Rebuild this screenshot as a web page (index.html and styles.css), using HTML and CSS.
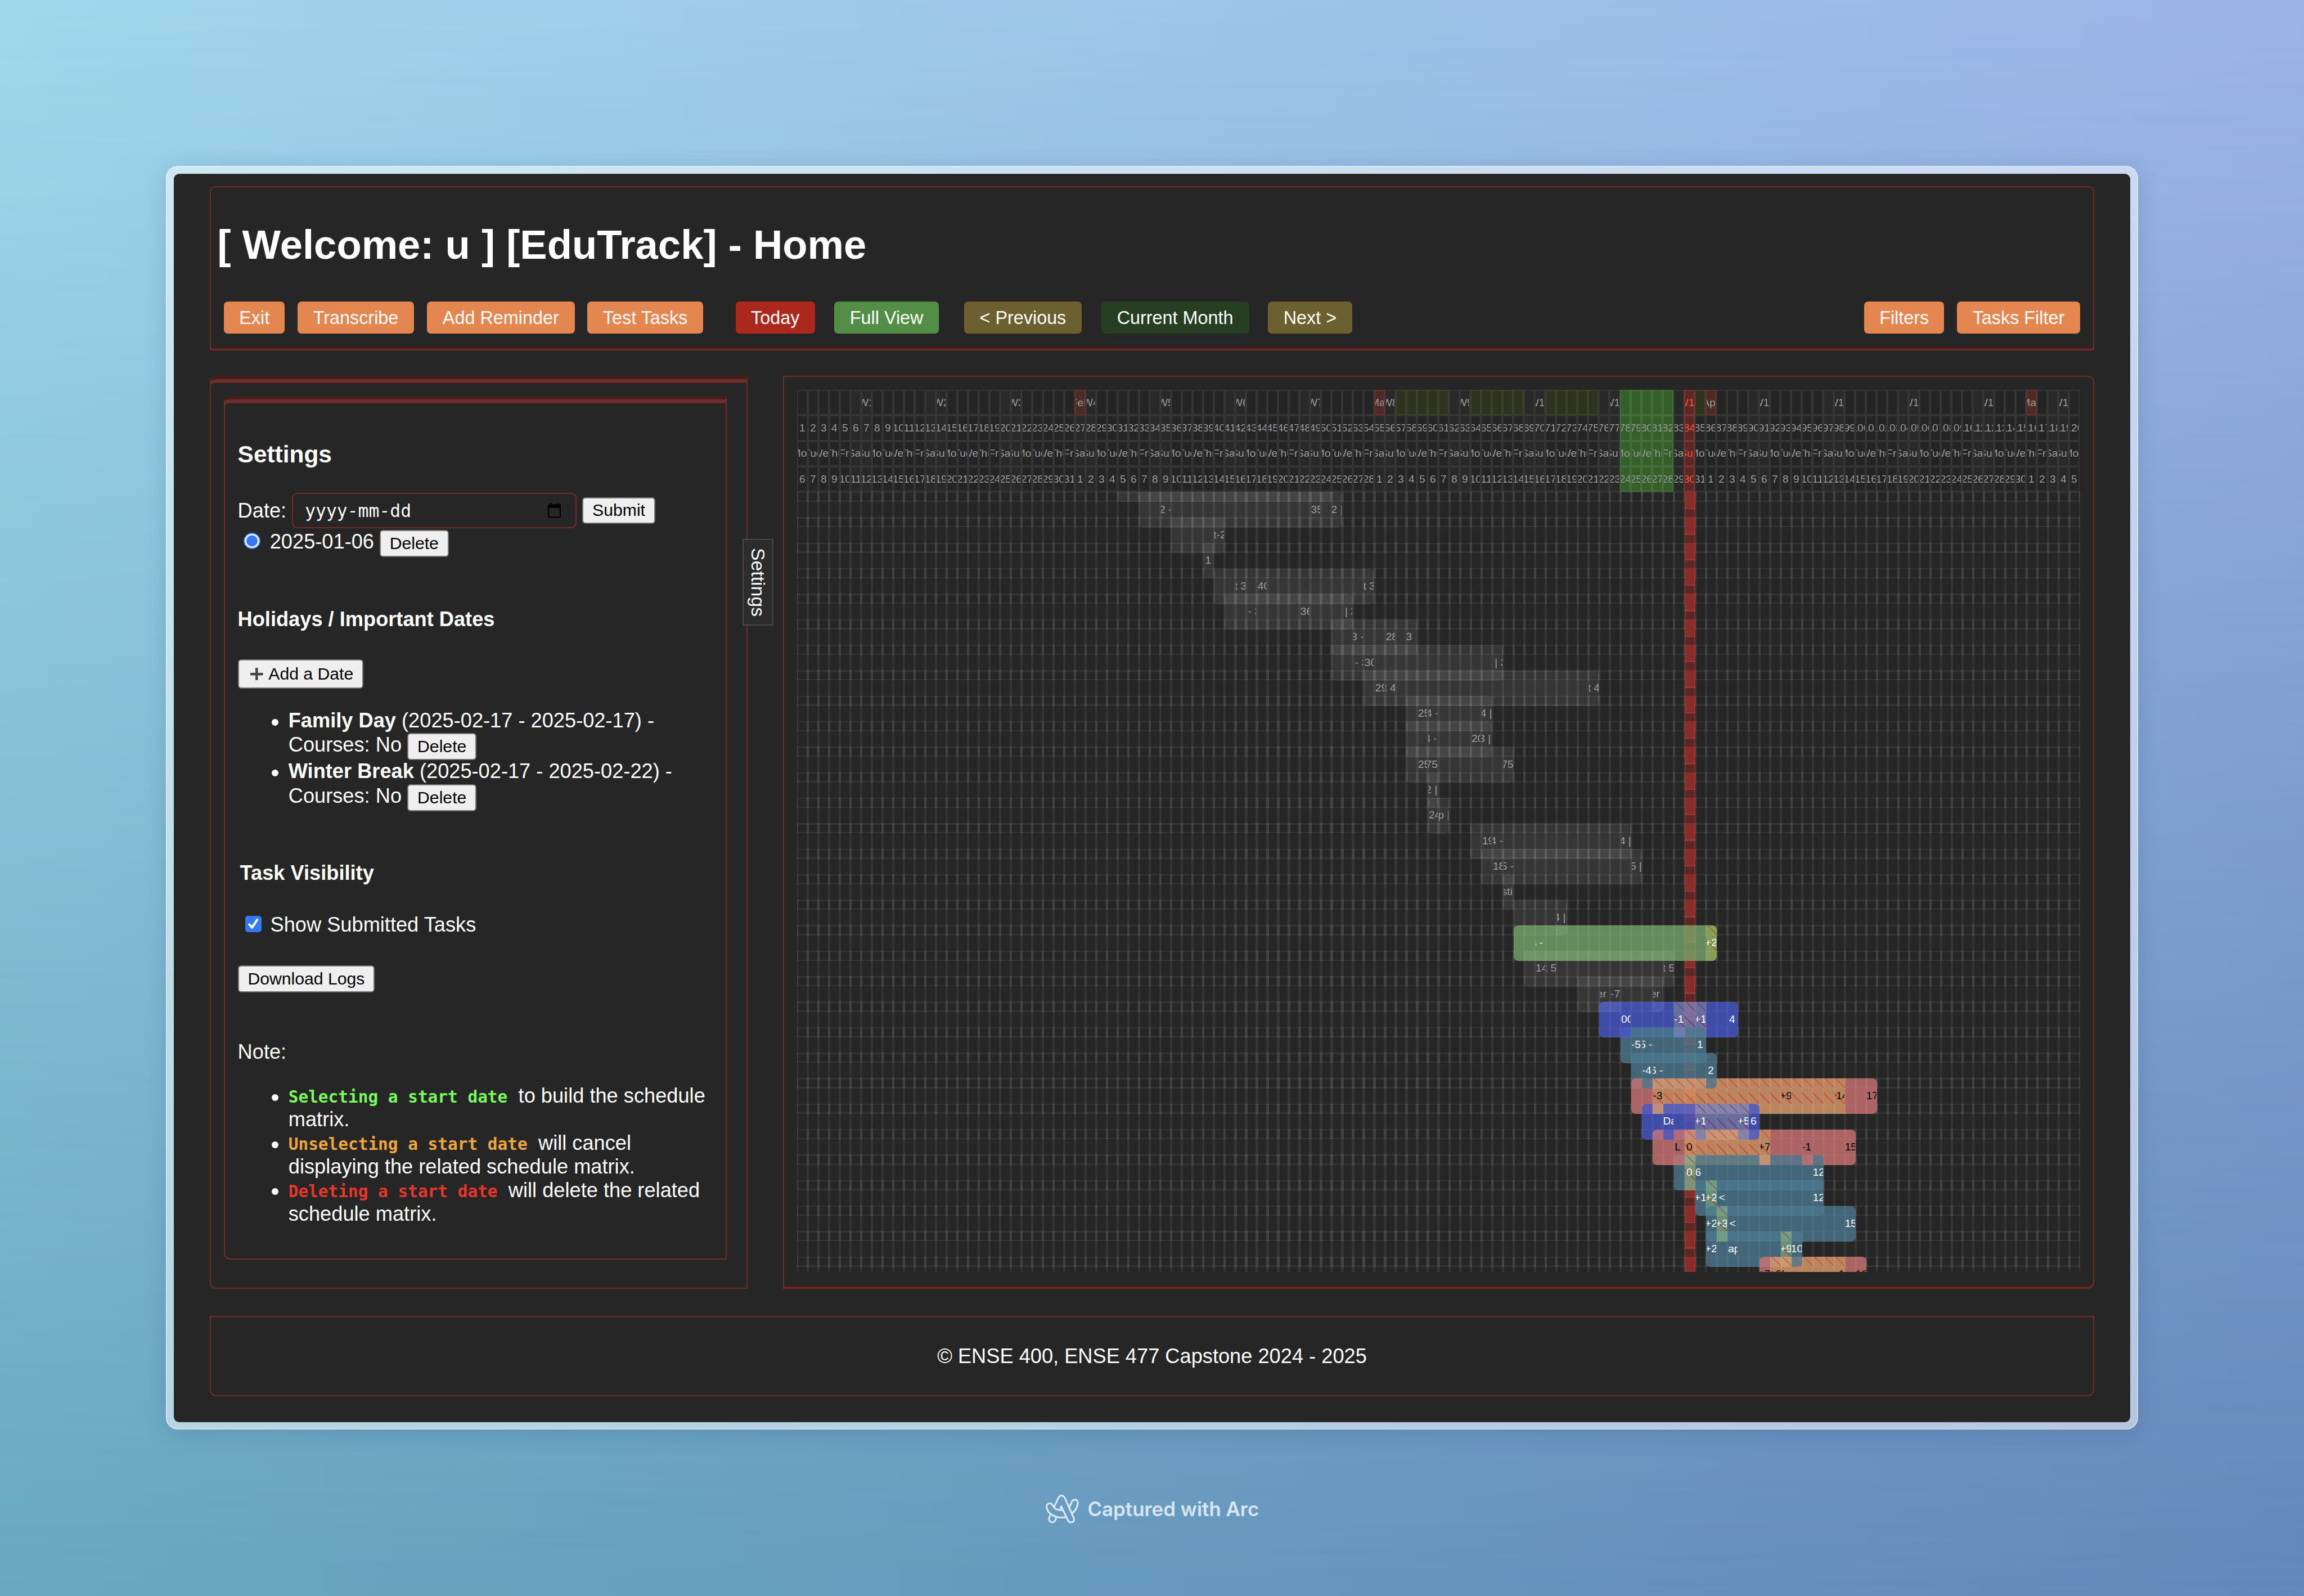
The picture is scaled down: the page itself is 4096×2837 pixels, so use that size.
FILE: index.html
```html
<!DOCTYPE html>
<html lang="en">
<head>
<meta charset="utf-8">
<title>[EduTrack] - Home</title>
<link rel="stylesheet" href="styles.css">
</head>
<body>
<div class="backdrop"></div>
<div class="stage">
  <div class="frame">
    <div class="window">
      <header class="top">
        <h1>[ Welcome: u ] [EduTrack] - Home</h1>
        <nav class="bar">
          <button class="btn w-exit">Exit</button>
          <button class="btn w-trans">Transcribe</button>
          <button class="btn w-add">Add Reminder</button>
          <button class="btn w-test">Test Tasks</button>
          <button class="btn today w-today">Today</button>
          <button class="btn full w-full">Full View</button>
          <button class="btn step w-prev">&lt; Previous</button>
          <button class="btn month w-month">Current Month</button>
          <button class="btn step w-next">Next &gt;</button>
          <span class="spacer"></span>
          <button class="btn w-filters">Filters</button>
          <button class="btn w-tasks">Tasks Filter</button>
        </nav>
      </header>

      <main class="columns">
        <aside class="side">
          <div class="settings">
            <h3>Settings</h3>
            <div class="date-row">
              <span>Date:</span>
              <div class="date-input"><span>yyyy-mm-dd</span>
                <svg class="cal" viewBox="0 0 29 33"><path fill="#000" fill-rule="evenodd" d="M4 3V0h4v3h13V0h4v3h1q3 0 3 3v24q0 3-3 3H3q-3 0-3-3V6q0-3 3-3zM3 11v19h23V11z"/></svg>
              </div>
              <button class="plain w-submit">Submit</button>
            </div>
            <div class="radio-row">
              <i class="radio"></i><span>2025-01-06</span><button class="plain w-delete">Delete</button>
            </div>
            <h4 class="holidays">Holidays / Important Dates</h4>
            <button class="plain add-date"><svg class="plus" viewBox="0 0 28 28"><path d="M14 0v28M0 14h28" stroke="#444" stroke-width="5.5"/></svg>Add a Date</button>
            <ul class="dates">
              <li><div><b>Family Day</b> (2025-02-17 - 2025-02-17) -</div><div class="second"><span>Courses: No</span><button class="plain w-delete">Delete</button></div></li>
              <li><div><b>Winter Break</b> (2025-02-17 - 2025-02-22) -</div><div class="second"><span>Courses: No</span><button class="plain w-delete">Delete</button></div></li>
            </ul>
            <h4 class="visibility">Task Visibility</h4>
            <div class="check-row"><svg class="check" viewBox="0 0 36 36"><rect width="36" height="36" rx="6" fill="#3577f5"/><path d="M9 19l6 7L26.500 8.500" fill="none" stroke="#fff" stroke-width="5" stroke-linecap="round" stroke-linejoin="round"/></svg><span>Show Submitted Tasks</span></div>
            <button class="plain logs">Download Logs</button>
            <p class="note">Note:</p>
            <ul class="notes">
              <li><code class="c-green">Selecting a start date</code> to build the schedule<br>matrix.</li>
              <li><code class="c-amber">Unselecting a start date</code> will cancel<br>displaying the related schedule matrix.</li>
              <li><code class="c-red">Deleting a start date</code> will delete the related<br>schedule matrix.</li>
            </ul>
          </div>
          <div class="tab">Settings</div>
        </aside>

        <section class="chart">
          <div class="head" id="head"></div>
          <div class="body" id="body"><div class="now"></div></div>
        </section>
      </main>

      <footer class="foot">© ENSE 400, ENSE 477 Capstone 2024 - 2025</footer>
    </div>
  </div>
  <div class="credit">
    <svg viewBox="80 90 224 190" fill="none" stroke="#d6e7f2" stroke-width="11.500" stroke-linejoin="round" stroke-linecap="round">
      <path d="M141 168L167 112Q187 85 207 112L267 246C276 275 240 282 229 262L196 192L186 168L176 191"/>
      <path d="M90 176C86 148 118 142 129 162C138 184 162 196 190 194M90 176C96 215 140 243 190 242Q205 242 217 238"/>
      <path d="M115 222L106 246C100 276 138 282 147 258L154 241"/>
      <path d="M238 175L252 144C258 120 293 120 293 146C292 172 276 200 254 215"/>
    </svg>
    <span>Captured with Arc</span>
  </div>
</div>
<script src="chart.js"></script>
</body>
</html>
```
FILE: styles.css
```css
html { font-size: 80.503px; }
* { box-sizing: border-box; }
body {
  margin: 0;
  width: 4096px;
  height: 2837px;
  overflow: hidden;
  position: relative;
  font-family: "Liberation Sans", Arial, sans-serif;
  font-size: .45rem;
  line-height: .52rem;
  color: #fff;
  background: linear-gradient(to right, #68a9c0, #6488ba);
}
.backdrop {
  position: absolute;
  inset: 0;
  background: linear-gradient(to right, #a0d7eb, #9bb4e6);
  mask-image: linear-gradient(to bottom, #000, transparent);
}
.stage {
  position: relative;
  height: 100%;
  display: flex;
  flex-direction: column;
  align-items: center;
  padding-top: 3.67rem;
}
.frame {
  width: 43.54rem;
  height: 27.9rem;
  padding: .17rem;
  border-radius: .26rem;
  background: rgba(255, 255, 255, .5);
  box-shadow: inset 0 0 0 .02rem rgba(255, 255, 255, .45), 0 .1rem .5rem rgba(30, 60, 110, .18);
}
.window {
  height: 100%;
  border-radius: .12rem;
  background: #262626;
  padding: .27rem .79rem 0;
}
.top {
  height: 3.63rem;
  border: .025rem solid #702d29;
  border-bottom: .04rem solid #702d29;
  box-shadow: inset 0 -.04rem #451e1b;
  border-radius: .12rem .12rem 0 0;
  padding: 0 .29rem 0 .13rem;
}
h1 {
  margin: .76rem 0 0 .015rem;
  font-size: .9rem;
  line-height: 1.02rem;
  white-space: nowrap;
}
.bar { display: flex; margin: .745rem 0 0 .16rem; }
.btn {
  font: .402rem/.7rem "Liberation Sans", Arial, sans-serif;
  height: .712rem;
  border: 0;
  border-radius: .09rem;
  padding: 0;
  background: #e38650;
  color: #fff;
  white-space: nowrap;
}
.today { background: #ad281c; }
.full { background: #528e45; }
.step { background: #6c6031; }
.month { background: #263f22; }
.spacer { flex: 1; }
.w-exit { width: 1.345rem; margin-right: .28rem; }
.w-trans { width: 2.575rem; margin-right: .285rem; }
.w-add { width: 3.26rem; margin-right: .28rem; }
.w-test { width: 2.56rem; margin-right: .715rem; }
.w-today { width: 1.755rem; margin-right: .425rem; }
.w-full { width: 2.31rem; margin-right: .555rem; }
.w-prev { width: 2.6rem; margin-right: .43rem; }
.w-month { width: 3.265rem; margin-right: .42rem; }
.w-next { width: 1.855rem; }
.w-filters { width: 1.77rem; margin-right: .28rem; }
.w-tasks { width: 2.72rem; }

.columns { display: flex; justify-content: space-between; margin-top: .56rem; height: 20.16rem; }
.side {
  position: relative;
  width: 11.88rem;
  border: .025rem solid #702d29;
  border-top: .08rem solid #451e1b;
  box-shadow: inset 0 .08rem #702d29;
  border-radius: .14rem 0 0 .14rem;
  padding: .37rem .44rem .62rem .29rem;
}
.settings {
  height: 100%;
  border: .025rem solid #702d29;
  border-top: .08rem solid #451e1b;
  box-shadow: inset 0 .08rem #702d29;
  border-radius: .14rem 0 0 .14rem;
  padding: .08rem 0 0 .28rem;
  white-space: nowrap;
}
h3 { margin: .835rem 0 0; font-size: .527rem; line-height: .6rem; }
h4 { margin: 0; font-size: .45rem; line-height: .52rem; }
.date-row { display: flex; align-items: center; gap: .125rem; height: .78rem; margin-top: .55rem; }
.date-input {
  display: flex;
  align-items: center;
  justify-content: space-between;
  width: 6.285rem;
  height: .78rem;
  border: .025rem solid #702d29;
  border-radius: .12rem;
  padding: 0 .32rem 0 .26rem;
  font: .39rem "DejaVu Sans Mono", monospace;
}
.cal { width: .29rem; height: .33rem; }
.plain {
  font: .375rem/.5rem "Liberation Sans", Arial, sans-serif;
  height: .595rem;
  padding: 0;
  border: .027rem solid #767676;
  border-radius: .07rem;
  background: #efefef;
  color: #000;
  white-space: nowrap;
}
.w-submit { width: 1.61rem; }
.w-delete { width: 1.53rem; }
.radio-row { display: flex; align-items: center; height: .66rem; }
.radio {
  width: .365rem;
  height: .365rem;
  margin: -.1rem .21rem 0 .135rem;
  border-radius: 50%;
  border: .03rem solid #3577f5;
  background: radial-gradient(circle, #3577f5 0 52%, #fff 58%);
}
.radio-row span { margin: -.06rem .12rem 0 0; }
.radio-row .plain { margin-top: .02rem; }
.holidays { margin-top: 1.09rem; }
.add-date {
  display: flex;
  align-items: center;
  width: 2.77rem;
  height: .65rem;
  margin-top: .625rem;
  padding-left: .255rem;
}
.plus { width: .28rem; height: .28rem; margin-right: .12rem; }
ul { margin: 0; padding: 0; list-style: none; }
li { position: relative; padding-left: 1.12rem; }
li::before {
  content: "";
  position: absolute;
  left: .75rem;
  top: .22rem;
  width: .15rem;
  height: .15rem;
  border-radius: 50%;
  background: #fff;
}
.dates { margin-top: .443rem; }
.second { display: flex; align-items: center; gap: .125rem; height: .605rem; }
.second span { margin-top: -.055rem; }
.second .plain { margin-top: .03rem; }
.visibility { margin: 1.115rem 0 0 .05rem; }
.check-row { display: flex; align-items: center; margin-top: .63rem; height: .52rem; }
.check { width: .36rem; height: .36rem; margin: -.045rem .195rem 0 .165rem; }
.logs { display: block; width: 3.026rem; margin-top: .63rem; }
.note { margin: 1.06rem 0 0; }
.notes { margin-top: .45rem; }
code {
  font: bold .3655rem/.4rem "DejaVu Sans Mono", monospace;
  margin-right: .115rem;
}
.c-green { color: #79fb5b; }
.c-amber { color: #efa63c; }
.c-red { color: #e8372a; }
.tab {
  position: absolute;
  left: 11.745rem;
  top: 3.525rem;
  width: .675rem;
  height: 1.91rem;
  border: .03rem solid #484848;
  background: rgba(46, 46, 46, .88);
  writing-mode: vertical-rl;
  text-align: center;
  font-size: .42rem;
  line-height: .59rem;
  padding-right: .02rem;
}

.chart {
  width: 28.96rem;
  border: .025rem solid #702d29;
  border-bottom: .04rem solid #702d29;
  box-shadow: inset 0 -.04rem #451e1b;
  border-radius: 0 .14rem .14rem 0;
  padding: .285rem 0 0 .285rem;
  --cw: .23614rem;
  --rh: .563rem;
  --ln: .027rem;
}
.head {
  display: grid;
  grid-template-columns: repeat(120, var(--cw));
  grid-auto-rows: var(--rh);
  width: 28.337rem;
  font-size: .238rem;
  color: #999;
}
.head div {
  display: flex;
  align-items: center;
  justify-content: center;
  overflow: hidden;
  border: var(--ln) solid #353535;
  background: #242424;
  white-space: nowrap;
}
.head span { flex: none; }
.head .we { background: #292929; }
.head .first { background: #4a2b25; border-color: #6b302b; }
.head .olive { background: #2e3320; border-color: #3d4128; }
.head .green { background: #345f28; border-color: #446f3a; }
.head .cur { background: #5b2825; border-color: #7a3532; color: #ff5533; }

.body {
  position: relative;
  width: 28.337rem;
  height: 17.22rem;
  overflow: hidden;
  background:
    repeating-linear-gradient(to bottom,
      rgba(255, 255, 255, .06) 0 .03rem, transparent .03rem .195rem,
      rgba(255, 255, 255, .06) .195rem .225rem, transparent .225rem .563rem);
}
.body::before, .body::after {
  content: "";
  position: absolute;
  inset: 0;
  background: repeating-linear-gradient(to right,
    rgba(255, 255, 255, .065) 0 .026rem, transparent .026rem .21rem,
    rgba(255, 255, 255, .065) .21rem .23614rem);
}
.body::after {
  mask-image: repeating-linear-gradient(to bottom, #000 0 .225rem, transparent .225rem .563rem);
}
.now {
  position: absolute;
  z-index: 1;
  left: calc(83 * var(--cw));
  top: 0;
  bottom: 0;
  width: var(--cw);
  border: solid rgba(255, 120, 110, .14);
  border-width: 0 .028rem;
  background:
    repeating-linear-gradient(to bottom,
      #8a2c27 0 .36rem, #923a35 .36rem .39rem, #5b2825 .39rem .563rem);
}
.cell {
  position: absolute;
  z-index: 2;
  left: calc(var(--c) * var(--cw));
  top: calc(var(--r) * var(--rh) - .56rem);
  width: var(--cw);
  height: .785rem;
  border: .024rem solid rgba(255, 255, 255, .035);
  overflow: hidden;
  font-size: .238rem;
  line-height: .74rem;
  white-space: nowrap;
  background-color: var(--bg);
  background-origin: border-box;
}
.cell.up { z-index: 3; }
.cell span { position: absolute; top: 0; left: var(--dx); }
.cell.l { border-top-left-radius: .1rem; border-bottom-left-radius: .1rem; }
.cell.r { border-top-right-radius: .1rem; border-bottom-right-radius: .1rem; }
.cell.gray { --bg: rgba(255, 255, 255, .075); color: #9e9e9e; border-color: rgba(255, 255, 255, .015); }
.grass { --bg: rgba(117, 165, 108, .8); --hb: rgba(158, 189, 100, .8); --hl: rgba(170, 70, 50, .7); }
.blue { --bg: rgba(70, 88, 203, .8); --hb: rgba(119, 130, 185, .8); --hl: rgba(130, 40, 115, .7); }
.teal { --bg: rgba(75, 120, 143, .8); --hb: rgba(124, 170, 137, .8); --hl: rgba(150, 60, 60, .7); }
.rose { --bg: rgba(205, 115, 115, .8); --hb: rgba(224, 157, 109, .8); --hl: rgba(210, 60, 55, .7); color: #000; }
.cell.hatch {
  background-color: var(--hb);
  background-image: repeating-linear-gradient(45deg, transparent 0 .158rem, var(--hl) .158rem .184rem, transparent .184rem .247rem);
  background-size: 100% .56rem;
  background-repeat: no-repeat;
}

.foot {
  margin-top: .6rem;
  height: 1.77rem;
  border: .025rem solid #702d29;
  border-radius: 0 0 .14rem .14rem;
  line-height: 1.74rem;
  text-align: center;
}
.credit {
  display: flex;
  align-items: center;
  margin-top: 1.4rem;
  height: .7rem;
  gap: .18rem;
  color: #d6e7f2;
  font: 600 .433rem Inter, sans-serif;
}
.credit svg { width: .76rem; height: .645rem; }
```
FILE: chart.js
```javascript
const head = document.getElementById("head");
const body = document.getElementById("body");
const DAYS = 120, TODAY = 83;
const names = ["Mon", "Tue", "Wed", "Thu", "Fri", "Sat", "Sun"];
const months = { 26: "Feb", 54: "Mar", 85: "Apr", 115: "May" };
const between = (i, a, b) => i >= a && i <= b;

for (let row = 0; row < 4; row++) {
  for (let i = 0; i < DAYS; i++) {
    const day = new Date(2025, 0, 6 + i);
    const weekday = i % 7;
    const cell = document.createElement("div");
    let text = "";
    if (weekday > 4) cell.className = "we";
    if (row === 0) {
      if (weekday === 6) text = "W" + (i + 1) / 7;
      if (between(i, 56, 60) || between(i, 63, 67) || between(i, 70, 74) || i === 84) cell.className = "olive";
      if (months[i]) { text = months[i]; cell.className = "first"; }
    }
    if (row === 1) text = i + 1;
    if (row === 2) text = names[weekday];
    if (row === 3) text = day.getDate();
    if (between(i, 77, 81)) cell.className = "green";
    if (i === TODAY) cell.className = "cur";
    if (text !== "") {
      const span = document.createElement("span");
      span.textContent = text;
      cell.append(span);
    }
    head.append(cell);
  }
}

// row, kind, first day, day after last, labels [day, text, offset], hatched days [from, to]
const tasks = [
  [0, "gray", 30, 50, []],
  [1, "gray", 32, 51, [[34, "2 -", -1.5], [48, "35", 2.7], [50, "2 |", 0]]],
  [2, "gray", 35, 40, [[39, "t-2", 0]]],
  [3, "gray", 38, 39, [[38, "1", 5.3]]],
  [4, "gray", 39, 54, [[41, "t 3", -1], [43, "40", 3], [53, "t 3", 0]]],
  [5, "gray", 40, 52, [[42, "- 3", 5.5], [47, "36", 3], [51, "| 3", 7]]],
  [6, "gray", 50, 58, [[52, "3 -", -2.7], [55, "28", 2.7], [57, "3", 0]]],
  [7, "gray", 50, 66, [[52, "- 3", 5.3], [53, "30", 3], [65, "| 3", 7]]],
  [8, "gray", 53, 75, [[54, "29", 3], [55, "t 4", -1.5], [74, "t 4", 0]]],
  [9, "gray", 57, 65, [[58, "25", 3], [59, "4 -", -2.7], [64, "4 |", -1]]],
  [10, "gray", 57, 65, [[59, "3 -", -7], [63, "20", 3], [64, "3 |", -4]]],
  [11, "gray", 57, 67, [[58, "25", 3], [59, "75", -3.5], [66, "75", -1.5]]],
  [12, "gray", 59, 60, [[59, "2 |", -4]]],
  [13, "gray", 59, 61, [[59, "24", 3], [60, "p |", 0]]],
  [14, "gray", 63, 78, [[64, "19", 3], [65, "4 -", -2.5], [77, "4 |", -1]]],
  [15, "gray", 64, 79, [[65, "18", 3], [66, "5 -", -2.3], [78, "5 |", -1]]],
  [16, "gray", 66, 67, [[66, "sti", -1]]],
  [17, "gray", 67, 72, [[71, "4 |", -4]]],
  [18, "grass", 67, 86, [[69, "s -", -7], [85, "+2", -1]], [85, 85]],
  [19, "gray", 68, 82, [[69, "14", 3], [70, "t 5", -1], [81, "t 5", 0]]],
  [20, "gray", 73, 81, [[75, "er", -3.5], [76, "-7", 3], [80, "er", -3.5]]],
  [21, "blue", 75, 88, [[77, "00", 3], [82, "-1", 2], [84, "+1", -1], [87, "4", 5.3]], [82, 84]],
  [22, "teal", 77, 85, [[78, "-5", 1.5], [79, "5 -", -3.5], [84, "1", 5.3]]],
  [23, "teal", 78, 86, [[79, "-4", 1.5], [80, "6 -", -3.5], [85, "2", 5.3]]],
  [24, "rose", 78, 101, [[80, "-3", 2], [92, "+9", -1], [97, "+14", -8.5], [100, "17", 1]], [80, 97]],
  [25, "blue", 79, 90, [[81, "Day", 1], [84, "+1", -1], [88, "+5", 0], [89, "6", 5.3]], [84, 88]],
  [26, "rose", 80, 99, [[82, "L", 3], [83, "0", 5.3], [90, "+7", -1], [94, "-1", 0], [98, "15", 1]], [83, 90]],
  [27, "teal", 82, 96, [[83, "0", 5.3], [84, "6", 1], [95, "12", 1]], [83, 83]],
  [28, "teal", 84, 96, [[84, "+1", -1], [85, "+2", -1], [86, "<", 6], [95, "12", 1]], [85, 85]],
  [29, "teal", 85, 99, [[85, "+2", -1], [86, "+3", -1], [87, "<", 6], [98, "15", 1]], [86, 86]],
  [30, "teal", 85, 94, [[85, "+2", -1], [87, "ap", 3], [92, "+9", -1], [93, "10", 0]], [92, 92]],
  [31, "rose", 90, 100, [[90, "+7", -1], [91, "+6", -1], [92, "|", 3], [97, "-1", 3], [99, "16", 1]], [91, 97]],
];

for (const [row, kind, from, to, labels, hatch] of tasks) {
  for (let c = from; c < to; c++) {
    const cell = document.createElement("div");
    cell.className = "cell " + kind;
    cell.style.setProperty("--c", c);
    cell.style.setProperty("--r", row);
    if (c === from) cell.classList.add("l");
    if (c === to - 1) cell.classList.add("r");
    if (hatch && between(c, hatch[0], hatch[1])) cell.classList.add("hatch");
    const label = labels.find(l => l[0] === c);
    if (label) {
      const span = document.createElement("span");
      span.textContent = label[1];
      span.style.setProperty("--dx", (label[2] - 2.4) / 100 + "rem");
      cell.append(span);
      cell.classList.add("up");
    }
    body.append(cell);
  }
}
```
